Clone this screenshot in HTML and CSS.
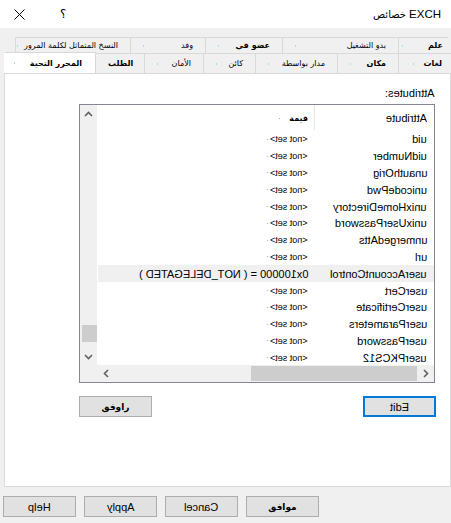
FILE: index.html
```html
<!DOCTYPE html>
<html lang="ar">
<head>
<meta charset="utf-8">
<title>خصائص EXCH</title>
<link rel="stylesheet" href="styles.css">
</head>
<body>
<div class="titlebar">
  <svg class="close" width="11" height="11" viewBox="0 0 11 11"><path d="M0.5 0.5L10.5 10.5M10.5 0.5L0.5 10.5" stroke="#000" stroke-width="1" fill="none"/></svg>
  <span class="help">؟</span>
  <span class="title"><span class="tar">خصائص</span><span class="ten">EXCH</span></span>
</div>

<div class="tabs">
  <div class="row row1">
    <div class="tab w115"><i class="dot d1"></i><span class="lbl">النسخ المتماثل لكلمة المرور</span></div>
    <div class="tab w75"><i class="dot"></i><span class="lbl">وفد</span></div>
    <div class="tab w77 b"><i class="dot"></i><span class="lbl">عضو في</span></div>
    <div class="tab w116"><i class="dot"></i><span class="lbl">بدو التشغيل</span></div>
    <div class="tab w49 b first"><i class="dot d4"></i><span class="lbl">علم</span></div>
  </div>
  <div class="row row2">
    <div class="tab w91 b sel"><i class="dot d9"></i><span class="lbl">المحرر التحية</span></div>
    <div class="tab w49 b"><i class="dot"></i><span class="lbl">الطلب</span></div>
    <div class="tab w59"><i class="dot"></i><span class="lbl">الأمان</span></div>
    <div class="tab w52"><i class="dot"></i><span class="lbl">كائن</span></div>
    <div class="tab w82"><i class="dot"></i><span class="lbl">مدار بواسطة</span></div>
    <div class="tab w61 b"><i class="dot"></i><span class="lbl">مكان</span></div>
    <div class="tab w53 b last"><i class="dot d15"></i><span class="lbl">لغات</span></div>
  </div>
</div>

<div class="panel">
  <div class="label"><span class="m">Attributes:</span></div>
  <div class="list">
    <div class="vscroll">
      <div class="arrow"><svg width="9" height="6" viewBox="0 0 9 6"><path d="M1 5L4.5 1.5L8 5" stroke="#606060" stroke-width="1.6" fill="none"/></svg></div>
      <div class="track v"><div class="vthumb"></div></div>
      <div class="arrow"><svg width="9" height="6" viewBox="0 0 9 6"><path d="M1 1L4.5 4.5L8 1" stroke="#606060" stroke-width="1.6" fill="none"/></svg></div>
    </div>
    <div class="content">
      <div class="hdr">
        <div class="vcell"><i class="pt"></i><span class="qh">قيمة</span></div>
        <div class="acell hdiv"><span class="m">Attribute</span></div>
      </div>
      <div class="r"><div class="vcell"><i class="pt"></i><span class="m ns">&lt;not set&gt;</span></div><div class="acell"><span class="m">uid</span></div></div>
      <div class="r"><div class="vcell"><i class="pt"></i><span class="m ns">&lt;not set&gt;</span></div><div class="acell"><span class="m">uidNumber</span></div></div>
      <div class="r"><div class="vcell"><i class="pt"></i><span class="m ns">&lt;not set&gt;</span></div><div class="acell"><span class="m">unauthOrig</span></div></div>
      <div class="r"><div class="vcell"><i class="pt"></i><span class="m ns">&lt;not set&gt;</span></div><div class="acell"><span class="m">unicodePwd</span></div></div>
      <div class="r"><div class="vcell"><i class="pt"></i><span class="m ns">&lt;not set&gt;</span></div><div class="acell"><span class="m">unixHomeDirectory</span></div></div>
      <div class="r"><div class="vcell"><i class="pt"></i><span class="m ns">&lt;not set&gt;</span></div><div class="acell"><span class="m">unixUserPassword</span></div></div>
      <div class="r"><div class="vcell"><i class="pt"></i><span class="m ns">&lt;not set&gt;</span></div><div class="acell"><span class="m">unmergedAtts</span></div></div>
      <div class="r"><div class="vcell"><i class="pt"></i><span class="m ns">&lt;not set&gt;</span></div><div class="acell"><span class="m">url</span></div></div>
      <div class="r hl"><div class="vcell"><span class="m">0x100000 = ( NOT_DELEGATED )</span></div><div class="acell"><span class="m">userAccountControl</span></div></div>
      <div class="r"><div class="vcell"><i class="pt"></i><span class="m ns">&lt;not set&gt;</span></div><div class="acell"><span class="m">userCert</span></div></div>
      <div class="r"><div class="vcell"><i class="pt"></i><span class="m ns">&lt;not set&gt;</span></div><div class="acell"><span class="m">userCertificate</span></div></div>
      <div class="r"><div class="vcell"><i class="pt"></i><span class="m ns">&lt;not set&gt;</span></div><div class="acell"><span class="m">userParameters</span></div></div>
      <div class="r"><div class="vcell"><i class="pt"></i><span class="m ns">&lt;not set&gt;</span></div><div class="acell"><span class="m">userPassword</span></div></div>
      <div class="r"><div class="vcell"><i class="pt"></i><span class="m ns">&lt;not set&gt;</span></div><div class="acell"><span class="m">userPKCS12</span></div></div>
    </div>
    <div class="corner"></div>
    <div class="hscroll">
      <div class="arrow"><svg width="6" height="9" viewBox="0 0 6 9"><path d="M5 1L1.5 4.5L5 8" stroke="#606060" stroke-width="1.6" fill="none"/></svg></div>
      <div class="track h"><div class="hthumb"></div></div>
      <div class="arrow"><svg width="6" height="9" viewBox="0 0 6 9"><path d="M1 1L4.5 4.5L1 8" stroke="#606060" stroke-width="1.6" fill="none"/></svg></div>
    </div>
  </div>
  <div class="pbtns">
    <div class="btn ar">راوفق</div>
    <div class="btn focus"><span class="m">Edit</span></div>
  </div>
</div>

<div class="bottom">
  <div class="btn"><span class="m">Help</span></div>
  <div class="btn"><span class="m">Apply</span></div>
  <div class="btn"><span class="m">Cancel</span></div>
  <div class="btn ar">موافق</div>
</div>
</body>
</html>
```

FILE: styles.css
```css
* { box-sizing: border-box; }
html, body { margin: 0; }
body {
  width: 451px;
  height: 523px;
  overflow: hidden;
  background: #f0f0f0;
  font-family: "Liberation Sans", Arial, sans-serif;
  font-size: 11px;
  color: #000;
}
.m { display: inline-block; transform: scaleX(-1); white-space: nowrap; }

.titlebar {
  height: 28px;
  background: #fff;
  display: flex;
  align-items: center;
}
.close { margin-left: 14px; margin-top: 1px; }
.help { margin-left: 35px; font-family: "DejaVu Sans", sans-serif; font-size: 12px; }
.title { margin-left: auto; margin-right: 10px; display: flex; align-items: baseline; gap: 3px; }
.tar { font-family: "DejaVu Sans", sans-serif; font-size: 10px; }
.ten { font-family: "Liberation Sans", sans-serif; font-size: 11.5px; }

.tabs { margin-top: 9px; margin-left: 4px; width: 447px; }
.row { display: flex; }
.row1 { margin-left: 11px; height: 16px; }
.row2 { height: 20px; }
.tab {
  border: 1px solid #d9d9d9;
  border-bottom: none;
  margin-right: -1px;
  display: flex;
  align-items: center;
  font-family: "DejaVu Sans", sans-serif;
  font-size: 8px;
  padding-right: 12px;
  white-space: nowrap;
}
.tab.first { padding-right: 5px; border-right: none; }
.tab.last { padding-right: 9px; border-right: none; }
.tab.b { font-weight: bold; }
.tab .lbl { margin-left: auto; }
.tab.sel {
  background: #fff;
  height: 21px;
  margin-top: -1px;
  margin-bottom: -1px;
  position: relative;
  z-index: 1;
  padding-right: 13px;
  border-left-color: #fff;
}
.dot { display: block; width: 1px; height: 2px; background: #a8dcea; margin-left: 12px; }
.d1 { margin-left: 1px; }
.d4 { margin-left: 3px; }
.d9 { margin-left: 9px; }
.d15 { margin-left: 14px; }
.w115 { width: 116px; }
.w75 { width: 76px; }
.w77 { width: 78px; }
.w116 { width: 117px; }
.w49 { width: 50px; }
.w91 { width: 92px; }
.w59 { width: 60px; }
.w52 { width: 53px; }
.w82 { width: 83px; }
.w61 { width: 62px; }
.w53 { width: 53px; }

.panel {
  margin-left: 4px;
  width: 447px;
  height: 414px;
  background: #fff;
  border: 1px solid #d9d9d9;
  padding: 0 15px 0 74px;
  display: flex;
  flex-direction: column;
}
.label { margin-top: 13px; height: 13px; line-height: 13px; text-align: right; }
.list {
  margin-top: 4px;
  height: 279px;
  border: 1px solid #828790;
  display: grid;
  grid-template-columns: 17px 1fr;
  grid-template-rows: 1fr 17px;
  background: #fff;
}
.vscroll { background: #f0f0f0; display: flex; flex-direction: column; }
.arrow { width: 17px; height: 17px; display: flex; align-items: center; justify-content: center; flex: none; }
.track { flex: 1; display: flex; }
.track.v { flex-direction: column; justify-content: flex-end; }
.vthumb { height: 17px; margin: 0 0 6px 2px; background: #cdcdcd; }
.track.h { justify-content: flex-end; align-items: stretch; }
.hthumb { width: 166px; margin: 1px 0; background: #cdcdcd; }
.corner { background: #f0f0f0; }
.hscroll { background: #f0f0f0; display: flex; }

.content { overflow: hidden; }
.hdr { display: flex; height: 26px; }
.r { display: flex; height: 16.8px; align-items: center; }
.r.hl { background: #f0f0f0; margin-left: 1px; }
.hdr .vcell, .hdr .acell { display: flex; align-items: center; justify-content: flex-end; }
.vcell {
  width: 217px;
  padding-right: 6px;
  display: flex;
  align-items: center;
  justify-content: flex-end;
  white-space: nowrap;
}
.r.hl .vcell { width: 216px; }
.acell { flex: 1; padding-right: 7px; text-align: right; white-space: nowrap; }
.hdiv { border-left: 1px solid #e5e5e5; height: 25px; }
.qh { font-family: "DejaVu Sans", sans-serif; font-size: 8px; font-weight: bold; }
.pt { display: block; width: 1px; height: 1px; background: #7fc4d6; margin-right: auto; }
.hdr .pt { margin-right: 9px; margin-left: 0; }
.r .pt { margin-right: 2px; margin-left: 0; }
.ns { font-size: 9px; }

.pbtns { margin-top: 13px; display: flex; justify-content: space-between; margin-right: -1px; }
.btn {
  width: 73px;
  height: 21px;
  background: #e1e1e1;
  border: 1px solid #adadad;
  display: flex;
  align-items: center;
  justify-content: center;
  white-space: nowrap;
}
.btn.focus { border: 2px solid #0078d7; }
.btn.ar { font-family: "DejaVu Sans", sans-serif; font-size: 9px; font-weight: bold; }

.bottom { margin-top: 9px; margin-left: 3px; display: flex; gap: 8px; }
```
